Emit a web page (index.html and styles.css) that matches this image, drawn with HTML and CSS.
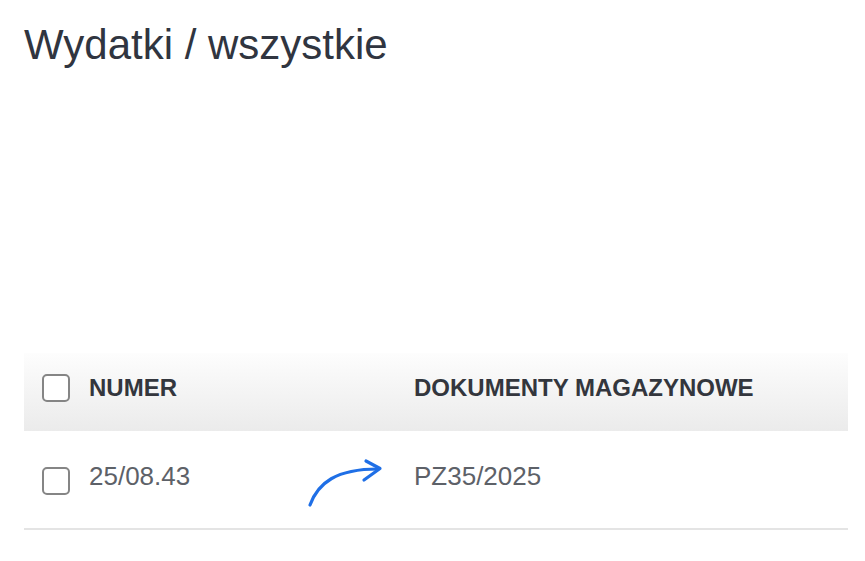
FILE: index.html
```html
<!DOCTYPE html>
<html lang="pl">
<head>
<meta charset="utf-8">
<title>Wydatki / wszystkie</title>
<link rel="stylesheet" href="styles.css">
</head>
<body>
<h1 class="title">Wydatki / wszystkie</h1>
<div class="table">
  <div class="thead">
    <div class="cell first">
      <span class="check"></span>
      <span class="th-text">NUMER</span>
    </div>
    <div class="cell">
      <span class="th-text">DOKUMENTY MAGAZYNOWE</span>
    </div>
  </div>
  <div class="row">
    <div class="cell first">
      <span class="check check-row"></span>
      <span class="td-text">25/08.43</span>
    </div>
    <div class="cell">
      <span class="td-text">PZ35/2025</span>
    </div>
    <svg class="arrow" width="90" height="60" viewBox="0 0 90 60" fill="none" stroke="#1f6fe6" stroke-width="3.2" stroke-linecap="round" stroke-linejoin="round">
      <path d="M4 52 C 12 30, 30 16, 72 16"/>
      <path d="M60 8 L74 15.5 L58 27"/>
    </svg>
  </div>
</div>
</body>
</html>
```
FILE: styles.css
```css
html, body {
  margin: 0;
  padding: 0;
  background: #ffffff;
}
body {
  font-family: "Liberation Sans", Arial, sans-serif;
  width: 865px;
  height: 561px;
  overflow: hidden;
}
.title {
  margin: 21px 0 0 24px;
  font-size: 42px;
  line-height: 48px;
  font-weight: normal;
  color: #303540;
}
.table {
  margin: 284px 0 0 24px;
  width: 824px;
}
.thead {
  display: flex;
  align-items: center;
  height: 78px;
  box-sizing: border-box;
  padding-bottom: 8px;
  background: linear-gradient(#fdfdfd, #ebebeb);
}
.cell {
  display: flex;
  align-items: center;
}
.cell.first {
  width: 390px;
  padding-left: 18px;
  box-sizing: border-box;
  gap: 19px;
}
.check {
  width: 28px;
  height: 28px;
  box-sizing: border-box;
  border: 2px solid #858585;
  border-radius: 5px;
  background: #fff;
  flex: none;
}
.th-text {
  font-size: 24px;
  font-weight: bold;
  color: #33363d;
}
.row {
  position: relative;
  display: flex;
  align-items: center;
  height: 99px;
  box-sizing: border-box;
  padding-bottom: 6px;
  border-bottom: 2px solid #e4e4e4;
}
.check-row {
  margin-top: 9px;
}
.td-text {
  font-size: 26px;
  color: #5d6168;
}
.arrow {
  position: absolute;
  left: 282px;
  top: 22px;
}
```
